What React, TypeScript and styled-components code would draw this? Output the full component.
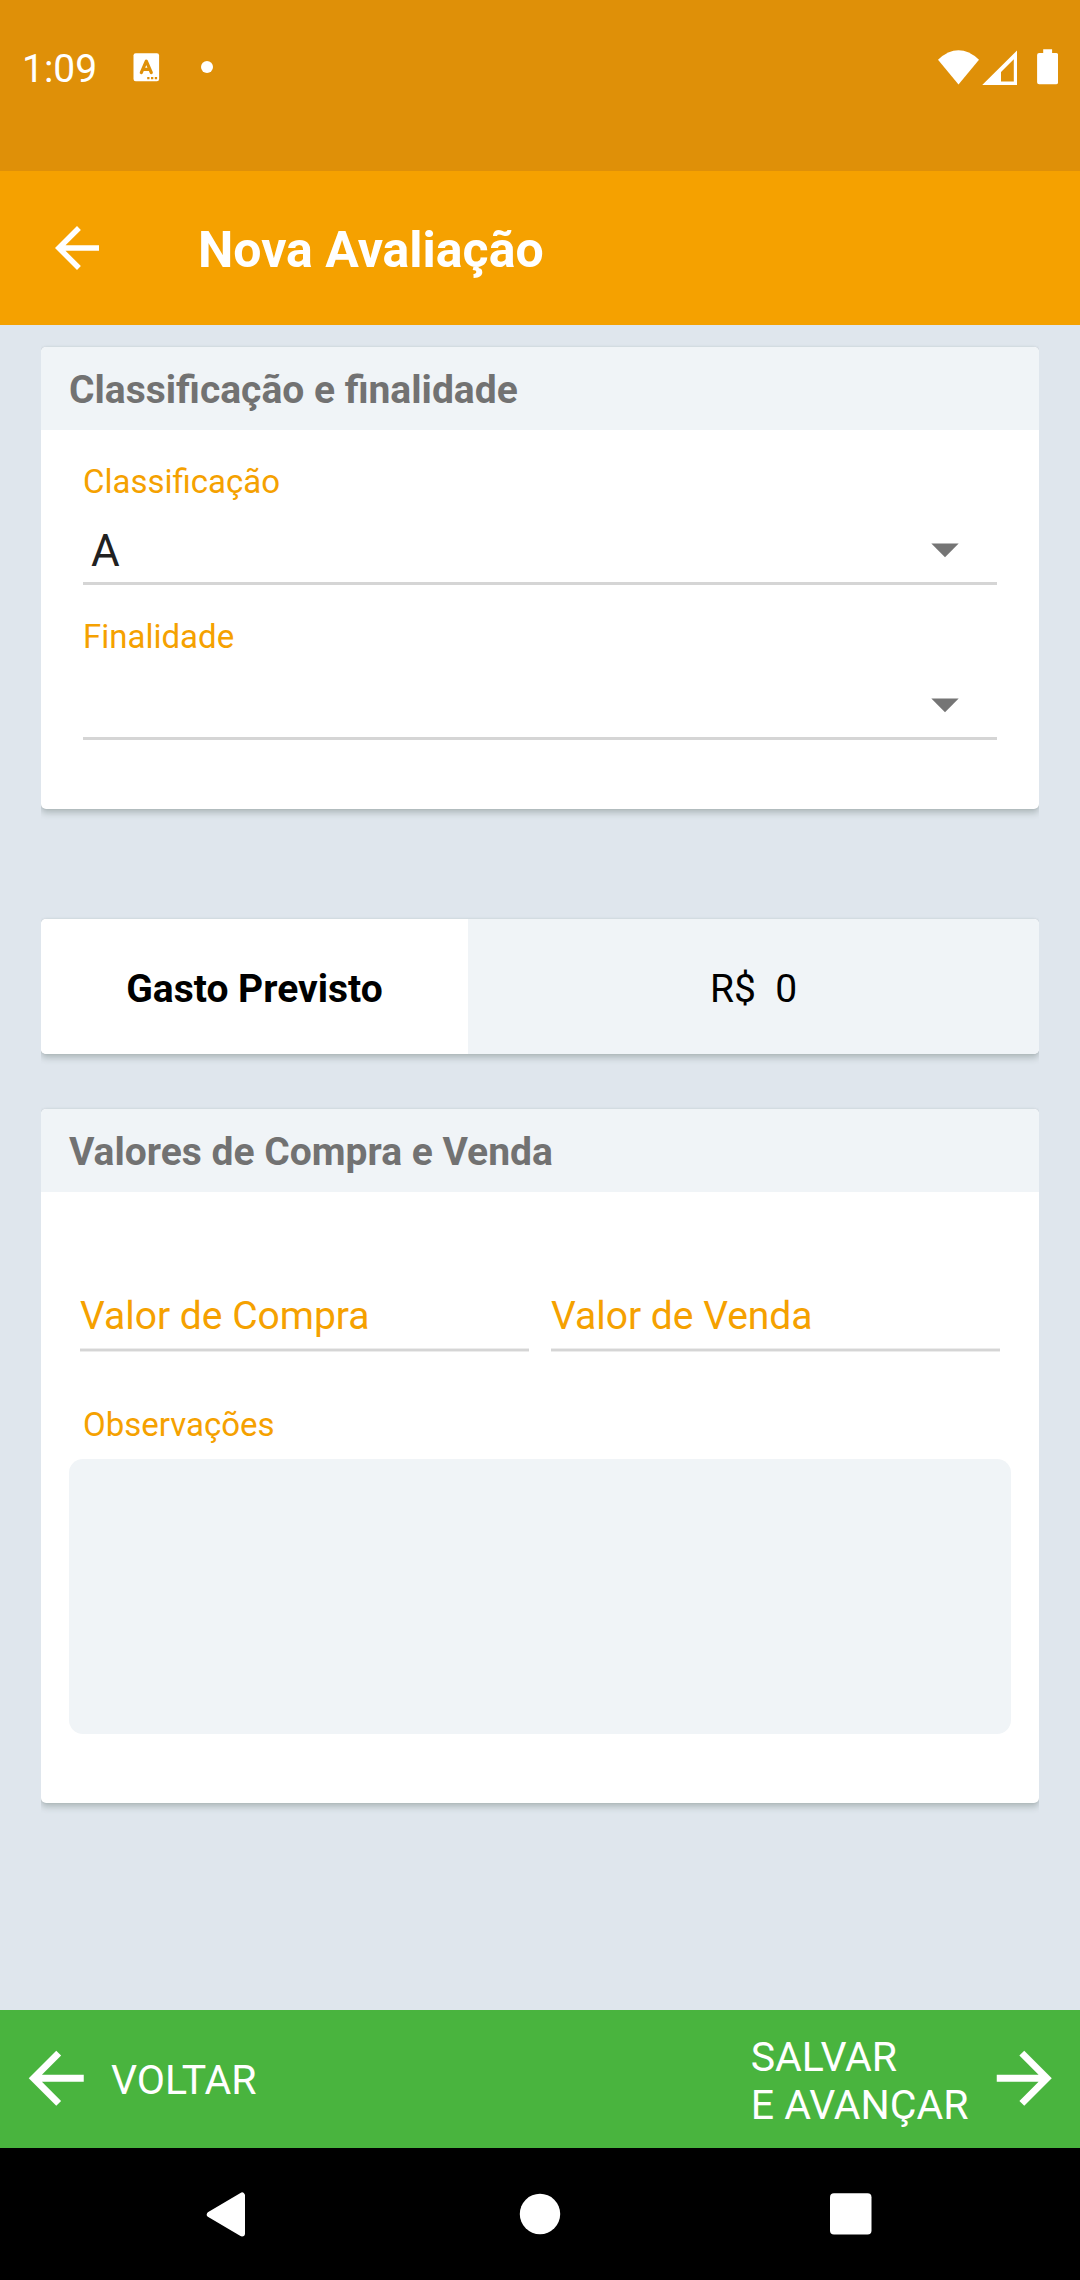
import React from "react";
import styled, { createGlobalStyle } from "styled-components";

const GlobalStyle = createGlobalStyle`
  *, *::before, *::after { box-sizing: border-box; }
  body { margin: 0; background: #dfe6ed; }
  button, textarea { font: inherit; border: 0; margin: 0; padding: 0; background: none; color: inherit; text-align: left; }
`;

const Screen = styled.div`
  display: flex;
  flex-direction: column;
  width: 1080px;
  height: 2280px;
  background: #dfe6ed;
  font-family: Roboto, "Liberation Sans", sans-serif;
  overflow: hidden;
  svg { display: block; flex: none; }
`;

const StatusBar = styled.header`
  display: flex;
  justify-content: space-between;
  height: 171px;
  padding: 0 22px 0 22px;
  background: #df9008;
  color: #fff;
`;

const StatusGroup = styled.div`
  display: flex;
  align-items: center;
  height: 136px;
`;

const Clock = styled.span`
  width: 111px;
  padding-top: 2px;
  font-size: 39px;
  line-height: 46px;
`;

const AppBar = styled.div`
  display: flex;
  align-items: center;
  gap: 88px;
  height: 154px;
  padding-left: 44px;
  background: #f5a100;
  color: #fff;
`;

const AppTitle = styled.h1`
  margin: 0;
  padding-top: 4px;
  font-size: 50px;
  line-height: 58px;
  font-weight: 700;
`;

const Content = styled.main`
  flex: 1;
  padding: 22px 41px 0;
`;

const Card = styled.section<{ $gap?: number }>`
  margin-bottom: ${(p) => p.$gap ?? 0}px;
  background: #fff;
  border-radius: 5px;
  box-shadow: 0 4px 6px rgba(70, 85, 80, 0.3), 0 0 2px rgba(70, 85, 80, 0.16);
  clip-path: inset(-3px 0 -14px 0);
`;

const CardHeader = styled.h2`
  height: 83px;
  margin: 0;
  padding: 20px 28px 0;
  border-radius: 5px 5px 0 0;
  background: #f0f4f7;
  color: #727272;
  font-size: 39px;
  line-height: 46px;
  font-weight: 700;
`;

const SelectList = styled.div`
  height: 379px;
  padding: 0 42px;
`;

const Field = styled.div`
  display: flex;
  flex-direction: column;
  height: 155px;
`;

const Label = styled.label`
  height: 72px;
  padding-top: 32px;
  color: #f5a100;
  font-size: 33px;
  line-height: 40px;
  white-space: nowrap;
`;

const SelectBox = styled.button`
  display: flex;
  align-items: center;
  justify-content: space-between;
  width: 100%;
  height: 83px;
  padding: 16px 38px 0 8px;
  border-bottom: 3px solid #d5d5d5;
  color: #212121;
  font-size: 44px;
  line-height: 52px;
`;

const SelectValue = styled.span`
  padding-top: 2px;
`;

const CostCard = styled(Card)`
  display: grid;
  grid-template-columns: 427px 571px;
  height: 135px;
`;

const CostCell = styled.div<{ $value?: boolean }>`
  display: flex;
  align-items: center;
  justify-content: center;
  padding-top: 5px;
  border-radius: ${(p) => (p.$value ? "0 5px 5px 0" : "5px 0 0 5px")};
  background: ${(p) => (p.$value ? "#f0f4f7" : "#fff")};
  color: #000;
  font-size: 39px;
  line-height: 46px;
  font-weight: ${(p) => (p.$value ? 400 : 700)};
  white-space: pre;
`;

const ValuesBody = styled.div`
  height: 611px;
  padding: 94px 28px 0;
`;

const InputRow = styled.div`
  display: grid;
  grid-template-columns: 1fr 1fr;
  gap: 22px;
  padding: 0 11px;
`;

const MoneyInput = styled.div`
  display: flex;
  align-items: center;
  height: 65px;
  padding-bottom: 4px;
  border-bottom: 2px solid #d5d5d5;
  box-shadow: 0 1px #ececec, inset 0 -1px #ececec;
  color: #f5a100;
  font-size: 39px;
  line-height: 46px;
  white-space: nowrap;
`;

const NotesLabel = styled(Label)`
  display: block;
  height: 108px;
  padding: 54px 14px 0;
`;

const Notes = styled.textarea`
  display: block;
  width: 100%;
  height: 275px;
  border-radius: 14px;
  background: #f0f4f7;
  resize: none;
  outline: none;
`;

const ActionBar = styled.footer`
  display: flex;
  align-items: center;
  justify-content: space-between;
  height: 138px;
  padding: 0 15px 1px 14.5px;
  background: #49b43e;
  color: #fff;
`;

const Action = styled.button`
  display: flex;
  align-items: center;
  gap: 14px;
  font-size: 41px;
  line-height: 48px;
  white-space: pre;
`;

const ActionText = styled.span<{ $shift: number }>`
  padding-top: ${(p) => p.$shift}px;
`;

const NavBar = styled.nav`
  display: flex;
  align-items: center;
  justify-content: space-between;
  height: 132px;
  padding: 0 208px 0 205px;
  background: #000;
`;

const BackArrow = ({ size, flip }: { size: number; flip?: boolean }) => (
  <svg width={size} height={size} viewBox="0 0 24 24" fill="currentColor">
    <path
      d="M20 11H7.83l5.59-5.59L12 4l-8 8 8 8 1.41-1.41L7.83 13H20v-2z"
      transform={flip ? "matrix(-1 0 0 1 24 0)" : undefined}
    />
  </svg>
);

const Caret = () => (
  <svg width="28" height="15" viewBox="0 0 28 15" fill="#757575">
    <path d="M.3.6H27.7L14 14.3z" />
  </svg>
);

const KeyboardIcon = () => (
  <svg width="81" height="30" viewBox="0 0 81 30" fill="none">
    <rect x="0.5" y="0.2" width="25.6" height="28" rx="2.2" fill="#fff" />
    <path d="M8.3 19.6 13.3 8.1 18.3 19.6M10 16.4H16.6" stroke="#df9008" strokeWidth="3.2" strokeLinecap="round" strokeLinejoin="round" />
    <path d="M14.2 24h2.3v2.2h-2.3zM18 24h2.3v2.2H18zM21.8 24h2.3v2.2h-2.3z" fill="#df9008" />
    <circle cx="74" cy="14" r="6" fill="#fff" />
  </svg>
);

const SystemIcons = () => (
  <svg width="122" height="40" viewBox="0 0 122 40" fill="#fff">
    <path d="M2 11.7Q22.5-7 43 11.7L22.5 36.4z" />
    <path fillRule="evenodd" d="M81 2.5V37H46.2zM77.8 11.3 65 23.9V33.4H77.8z" />
    <path d="M107.2 1.2h8.9V5h4a2 2 0 0 1 2 2v27.3a2 2 0 0 1-2 2h-17a2 2 0 0 1-2-2V7a2 2 0 0 1 2-2h4.1z" />
  </svg>
);

const NavBack = () => (
  <svg width="45" height="48" viewBox="0 0 45 48">
    <path d="M4.8 24.5 37 5.5V43.5z" fill="#fff" stroke="#fff" strokeWidth="6" strokeLinejoin="round" />
  </svg>
);

const NavHome = () => (
  <svg width="42" height="42" viewBox="0 0 42 42">
    <circle cx="21" cy="21" r="20.2" fill="#fff" />
  </svg>
);

const NavRecent = () => (
  <svg width="42" height="42" viewBox="0 0 42 42">
    <rect x="0" y="0.3" width="41.5" height="41.3" rx="4" fill="#fff" />
  </svg>
);

const selects = [
  { label: "Classificação", value: "A" },
  { label: "Finalidade", value: "" },
];

export default function App() {
  return (
    <>
      <GlobalStyle />
      <Screen>
        <StatusBar>
          <StatusGroup>
            <Clock>1:09</Clock>
            <KeyboardIcon />
          </StatusGroup>
          <StatusGroup>
            <SystemIcons />
          </StatusGroup>
        </StatusBar>
        <AppBar>
          <BackArrow size={66} />
          <AppTitle>Nova Avaliação</AppTitle>
        </AppBar>
        <Content>
          <Card $gap={110}>
            <CardHeader>Classificação e finalidade</CardHeader>
            <SelectList>
              {selects.map((s) => (
                <Field key={s.label}>
                  <Label>{s.label}</Label>
                  <SelectBox>
                    <SelectValue>{s.value}</SelectValue>
                    <Caret />
                  </SelectBox>
                </Field>
              ))}
            </SelectList>
          </Card>
          <CostCard as="section" $gap={55}>
            <CostCell>Gasto Previsto</CostCell>
            <CostCell $value>{"R$  0"}</CostCell>
          </CostCard>
          <Card>
            <CardHeader>Valores de Compra e Venda</CardHeader>
            <ValuesBody>
              <InputRow>
                <MoneyInput>Valor de Compra</MoneyInput>
                <MoneyInput>Valor de Venda</MoneyInput>
              </InputRow>
              <NotesLabel htmlFor="notes">Observações</NotesLabel>
              <Notes id="notes" />
            </ValuesBody>
          </Card>
        </Content>
        <ActionBar>
          <Action>
            <BackArrow size={82.5} />
            <ActionText $shift={3}>VOLTAR</ActionText>
          </Action>
          <Action>
            <ActionText $shift={5}>{"SALVAR\nE AVANÇAR"}</ActionText>
            <BackArrow size={82.5} flip />
          </Action>
        </ActionBar>
        <NavBar>
          <NavBack />
          <NavHome />
          <NavRecent />
        </NavBar>
      </Screen>
    </>
  );
}
